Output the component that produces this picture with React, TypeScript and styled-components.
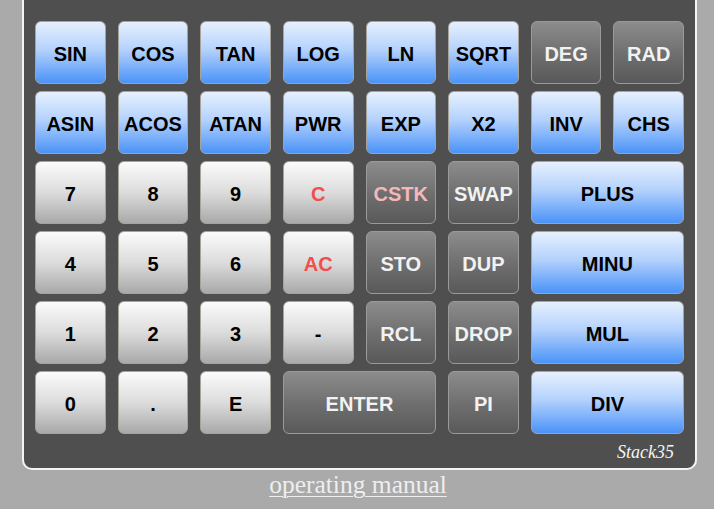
import React from 'react';
import styled, { createGlobalStyle } from 'styled-components';

type Kind = 'blue' | 'light' | 'dark';
type Tone = 'normal' | 'red' | 'pink';

interface Key {
  label: string;
  kind: Kind;
  span?: number;
  tone?: Tone;
}

const keys: Key[] = [
  { label: 'SIN', kind: 'blue' },
  { label: 'COS', kind: 'blue' },
  { label: 'TAN', kind: 'blue' },
  { label: 'LOG', kind: 'blue' },
  { label: 'LN', kind: 'blue' },
  { label: 'SQRT', kind: 'blue' },
  { label: 'DEG', kind: 'dark' },
  { label: 'RAD', kind: 'dark' },

  { label: 'ASIN', kind: 'blue' },
  { label: 'ACOS', kind: 'blue' },
  { label: 'ATAN', kind: 'blue' },
  { label: 'PWR', kind: 'blue' },
  { label: 'EXP', kind: 'blue' },
  { label: 'X2', kind: 'blue' },
  { label: 'INV', kind: 'blue' },
  { label: 'CHS', kind: 'blue' },

  { label: '7', kind: 'light' },
  { label: '8', kind: 'light' },
  { label: '9', kind: 'light' },
  { label: 'C', kind: 'light', tone: 'red' },
  { label: 'CSTK', kind: 'dark', tone: 'pink' },
  { label: 'SWAP', kind: 'dark' },
  { label: 'PLUS', kind: 'blue', span: 2 },

  { label: '4', kind: 'light' },
  { label: '5', kind: 'light' },
  { label: '6', kind: 'light' },
  { label: 'AC', kind: 'light', tone: 'red' },
  { label: 'STO', kind: 'dark' },
  { label: 'DUP', kind: 'dark' },
  { label: 'MINU', kind: 'blue', span: 2 },

  { label: '1', kind: 'light' },
  { label: '2', kind: 'light' },
  { label: '3', kind: 'light' },
  { label: '-', kind: 'light' },
  { label: 'RCL', kind: 'dark' },
  { label: 'DROP', kind: 'dark' },
  { label: 'MUL', kind: 'blue', span: 2 },

  { label: '0', kind: 'light' },
  { label: '.', kind: 'light' },
  { label: 'E', kind: 'light' },
  { label: 'ENTER', kind: 'dark', span: 2 },
  { label: 'PI', kind: 'dark' },
  { label: 'DIV', kind: 'blue', span: 2 },
];

const GlobalStyle = createGlobalStyle`
  html, body {
    margin: 0;
    padding: 0;
    background: #aaaaaa;
  }
  body {
    font-family: "Liberation Sans", Arial, sans-serif;
  }
`;

const Page = styled.div`
  width: 714px;
  height: 509px;
  overflow: hidden;
  display: flex;
  flex-direction: column;
  align-items: flex-start;
`;

const Panel = styled.div`
  width: 649px;
  margin-left: 22px;
  background: #4f4f4f;
  border: 2px solid #f4f4f4;
  border-top: none;
  border-radius: 0 0 10px 10px;
  padding: 21px 11px 5px 11px;
  box-sizing: content-box;
  display: flex;
  flex-direction: column;
`;

const Grid = styled.div`
  display: grid;
  grid-template-columns: repeat(8, 1fr);
  grid-auto-rows: 63px;
  column-gap: 12px;
  row-gap: 7px;
`;

const backgrounds: Record<Kind, string> = {
  blue: 'linear-gradient(to bottom, #e6f0fe 0%, #b5d2fc 45%, #4a93f8 100%)',
  light: 'linear-gradient(to bottom, #fbfbfb 0%, #dcdcdc 50%, #a9a9a9 100%)',
  dark: 'linear-gradient(to bottom, #8c8c8c 0%, #707070 50%, #595959 100%)',
};

const textColors: Record<Kind, string> = {
  blue: '#000000',
  light: '#000000',
  dark: '#f2f2f2',
};

const toneColors: Record<Tone, string | null> = {
  normal: null,
  red: '#f24e4e',
  pink: '#f5b8b8',
};

const KeyButton = styled.button<{ $kind: Kind; $span: number; $tone: Tone }>`
  grid-column: span ${(p) => p.$span};
  margin: 0;
  padding: 3px 0 0 0;
  border: 1px solid ${(p) => (p.$kind === 'dark' ? '#9a9a9a' : '#a8a39a')};
  border-radius: 6px;
  background: ${(p) => backgrounds[p.$kind]};
  color: ${(p) => toneColors[p.$tone] ?? textColors[p.$kind]};
  font-family: "Liberation Sans", Arial, sans-serif;
  font-weight: bold;
  font-size: 20px;
  display: flex;
  align-items: center;
  justify-content: center;
  cursor: pointer;
`;

const Brand = styled.div`
  align-self: flex-end;
  margin-top: 7px;
  margin-right: 10px;
  font-family: "Liberation Serif", "Times New Roman", serif;
  font-style: italic;
  font-size: 18px;
  color: #f4f4f4;
  line-height: 22px;
`;

const ManualLink = styled.a`
  align-self: center;
  margin-top: 0;
  margin-left: 2px;
  font-family: "Liberation Serif", "Times New Roman", serif;
  font-size: 25.5px;
  color: #eeeeee;
  text-decoration: underline;
  text-decoration-thickness: 1px;
  text-underline-offset: 3px;
`;

const App: React.FC = () => {
  return (
    <>
      <GlobalStyle />
      <Page>
        <Panel>
          <Grid>
            {keys.map((k) => (
              <KeyButton key={k.label} $kind={k.kind} $span={k.span ?? 1} $tone={k.tone ?? 'normal'}>
                {k.label}
              </KeyButton>
            ))}
          </Grid>
          <Brand>Stack35</Brand>
        </Panel>
        <ManualLink href="#">operating manual</ManualLink>
      </Page>
    </>
  );
};

export default App;
